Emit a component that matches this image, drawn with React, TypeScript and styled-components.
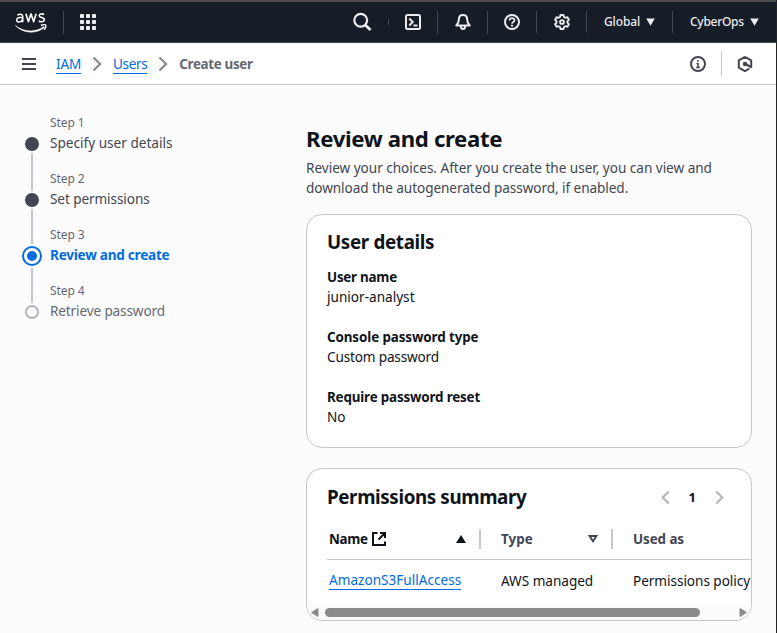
import React from 'react';
import styled, { createGlobalStyle } from 'styled-components';

const c = {
  ink: '#0f141a',
  body: '#424650',
  muted: '#656871',
  border: '#c6c6cd',
  disabled: '#b4b4bb',
  link: '#006ce0',
  nav: '#161d26',
};

const GlobalStyle = createGlobalStyle`
  * { box-sizing: border-box; }
  body { margin: 0; overflow: hidden; }
  h1, h2, p, dl, dt, dd, ol { margin: 0; padding: 0; }
  svg { display: block; flex: none; }
`;

const Page = styled.div`
  width: 777px;
  height: 633px;
  overflow: hidden;
  display: flex;
  flex-direction: column;
  background: #fcfcfd;
  border-right: 1px solid #202224;
  color: ${c.ink};
  font: 400 13.6px/20px 'Noto Sans', 'Open Sans', sans-serif;
`;

/* Global navigation */
const TopBar = styled.header`
  flex: none;
  height: 43px;
  display: flex;
  align-items: center;
  background: ${c.nav};
  border-top: 2px solid #4a4a4b;
  border-bottom: 1px solid #424650;
  color: #ebebf0;
`;
const Slot = styled.div<{ $w: number }>`
  flex: none;
  width: ${p => p.$w}px;
  display: flex;
  align-items: center;
  justify-content: center;
`;
const NavRule = styled.span<{ $h?: number }>`
  flex: none;
  width: 1px;
  height: ${p => p.$h ?? 23}px;
  background: #424650;
`;
const Spring = styled.div`
  flex: 1;
`;
const NavMenu = styled.div<{ $w: number; $ls: number }>`
  flex: none;
  width: ${p => p.$w}px;
  padding-left: 17px;
  display: flex;
  align-items: center;
  gap: 6px;
  font-size: 12px;
  font-weight: 500;
  letter-spacing: ${p => p.$ls}px;
`;

/* Breadcrumb bar */
const CrumbBar = styled.nav`
  flex: none;
  height: 42px;
  display: flex;
  align-items: center;
  background: #fff;
  border-bottom: 1px solid ${c.border};
  padding: 0 8px 0 22px;
`;
const Crumbs = styled.div`
  display: flex;
  align-items: center;
  margin-left: 20px;
`;
const Link = styled.a<{ $ls?: number }>`
  color: ${c.link};
  letter-spacing: ${p => p.$ls ?? 0}px;
  line-height: 18px;
  border-bottom: 1px solid ${c.link};
`;
const CrumbLink = styled(Link)`
  padding-top: 1px;
`;
const CrumbArrow = styled.span`
  width: 32px;
  display: flex;
  justify-content: center;
`;
const CurrentCrumb = styled.span`
  color: ${c.muted};
  font-size: 13.4px;
  font-weight: 700;
  letter-spacing: -0.34px;
`;
const CrumbRule = styled.span`
  width: 1px;
  height: 25px;
  background: ${c.border};
`;

/* Body */
const Body = styled.div`
  flex: 1;
  min-height: 0;
  display: flex;
`;
const Wizard = styled.aside`
  flex: none;
  width: 306px;
  padding: 28px 0 0 22px;
  display: flex;
  gap: 8px;
`;
const Rail = styled.div`
  width: 20px;
  padding-top: 24px;
  display: flex;
  flex-direction: column;
  align-items: center;
  gap: 2px;
`;
const Dot = styled.span<{ $kind: 'done' | 'todo' }>`
  width: 14px;
  height: 14px;
  border-radius: 50%;
  background: ${p => (p.$kind === 'done' ? c.body : '#fcfcfd')};
  border: 2px solid ${p => (p.$kind === 'done' ? c.body : c.disabled)};
`;
const CurrentDot = styled.span`
  width: 20px;
  height: 20px;
  padding: 3px;
  border-radius: 50%;
  border: 2px solid ${c.link};
  background: ${c.link} content-box;
`;
const RailLine = styled.span<{ $h: number }>`
  width: 2px;
  height: ${p => p.$h}px;
  background: ${c.border};
`;
const Steps = styled.ol`
  list-style: none;
  display: flex;
  flex-direction: column;
  gap: 16px;
`;
const StepLabel = styled.div`
  color: ${c.muted};
  font-size: 12px;
  letter-spacing: -0.1px;
`;
const StepTitle = styled.div<{ $tone: 'done' | 'current' | 'todo'; $ls: number }>`
  color: ${p => ({ done: c.body, current: c.link, todo: c.muted })[p.$tone]};
  font-weight: ${p => (p.$tone === 'current' ? 700 : 400)};
  letter-spacing: ${p => p.$ls}px;
`;

const Main = styled.main`
  width: 446px;
  padding-top: 39px;
  display: flex;
  flex-direction: column;
`;
const Title = styled.h1`
  font-size: 22.2px;
  line-height: 30px;
  font-weight: 700;
  letter-spacing: -0.35px;
`;
const Lead = styled.p`
  padding-top: 4px;
  margin-bottom: 16px;
  color: ${c.body};
  white-space: nowrap;
`;
const LeadLine = styled.span<{ $ls: number }>`
  display: block;
  letter-spacing: ${p => p.$ls}px;
`;
const Card = styled.section<{ $h: number }>`
  flex: none;
  height: ${p => p.$h}px;
  margin-bottom: 20px;
  border: 1px solid ${c.border};
  border-radius: 16px;
  background: #fff;
  overflow: hidden;
`;
const Heading = styled.h2<{ $ls: number }>`
  font-size: 18.8px;
  line-height: 24px;
  font-weight: 700;
  letter-spacing: ${p => p.$ls}px;
`;
const Details = styled.dl`
  padding: 15px 20px;
`;
const Pair = styled.div`
  margin-top: 20px;
  &:first-of-type { margin-top: 13px; }
`;
const Key = styled.dt<{ $ls: number }>`
  font-size: 13.4px;
  font-weight: 700;
  letter-spacing: ${p => p.$ls}px;
`;
const Value = styled.dd<{ $ls: number }>`
  letter-spacing: ${p => p.$ls}px;
`;

/* Permissions table */
const TableHead = styled.div`
  height: 50px;
  padding: 5px 24px 0 20px;
  display: flex;
  align-items: center;
  justify-content: space-between;
`;
const Pager = styled.div`
  display: flex;
  align-items: center;
  gap: 16px;
  padding-top: 1px;
  font-size: 13px;
  font-weight: 700;
`;
const Columns = styled.div`
  height: 41px;
  margin-left: 20px;
  display: flex;
  align-items: center;
  border-bottom: 1px solid ${c.border};
`;
const Row = styled(Columns)`
  height: 44px;
  padding-bottom: 3px;
  border-bottom: 0;
`;
const Cell = styled.div<{ $w: number; $pad: number; $ls: number; $tone?: string }>`
  flex: none;
  width: ${p => p.$w}px;
  padding-left: ${p => p.$pad}px;
  display: flex;
  align-items: center;
  color: ${p => p.$tone ?? c.ink};
  letter-spacing: ${p => p.$ls}px;
  white-space: nowrap;
`;
const HeadCell = styled(Cell)`
  font-size: 13.4px;
  font-weight: 700;
  & > svg:last-of-type { margin-right: 13px; }
`;
const NameLabel = styled.span`
  margin-right: 4px;
  padding-bottom: 1px;
`;
const Divider = styled.span`
  width: 2px;
  height: 20px;
  background: ${c.border};
`;
const ScrollTrack = styled.div`
  height: 16px;
  padding: 1px 4px 0;
  display: flex;
  align-items: center;
  background: #fbfbfb;
`;
const Thumb = styled.span`
  width: 375px;
  height: 9px;
  margin-left: 6px;
  border-radius: 5px;
  background: #8b8b8b;
`;

const Chevron = ({ dir, color, s = 16 }: { dir: 'l' | 'r'; color: string; s?: number }) => (
  <svg width={s} height={s} viewBox="0 0 16 16" fill="none" stroke={color} strokeWidth="2.300">
    <path d={dir === 'r' ? 'M4.500 1.500 11 8l-6.500 6.500' : 'M11.500 1.500 5 8l6.500 6.500'} />
  </svg>
);
const Caret = () => (
  <svg width="9" height="8" viewBox="0 0 9 8"><path d="M.2.5h8.600L4.500 7.700z" fill="#ebebf0" /></svg>
);
const Icon = ({ size = 16, color = '#ebebf0', children }: { size?: number; color?: string; children: React.ReactNode }) => (
  <svg width={size} height={size} viewBox="0 0 16 16" fill="none" stroke={color} strokeWidth="2" strokeLinejoin="round">
    {children}
  </svg>
);

const AwsLogo = () => (
  <svg width="32" height="21" viewBox="0 0 32 21" fill="none" stroke="#fff">
    <g strokeWidth="1.600" strokeLinejoin="round">
      <path d="M2.300 3.100c2.500-1.400 5.400-1.300 5.400 1.300v5.800M7.700 5.800C4.300 5.100 1.700 5.900 1.700 8.100c0 2.600 4.500 2.600 6-.6" />
      <path d="m10.900 1.700 2.500 8.100 2.600-8 2.600 8 2.500-8.100" />
      <path d="M29.200 2.500c-2-1-5-.7-5 1.200 0 2.300 5.200 1.300 5.200 3.900 0 2.400-3.500 2.700-5.600 1.400" />
    </g>
    <path d="M.4 13.500c8 6.800 20.300 7.300 28.200 1.100l.8 1c-7.800 6.700-21.500 6.200-29-2.100z" fill="#fff" strokeWidth=".5" />
    <path d="M25.800 13.300c3-.8 4.800-.7 5 0 .3.900-.2 2.800-1.700 4.600" strokeWidth="1.400" />
  </svg>
);

const Apps = () => (
  <svg width="16" height="16" viewBox="0 0 16 16" fill="#ebebf0">
    {[0, 6, 12].map(y => [0, 6, 12].map(x => <rect key={`${x}-${y}`} x={x} y={y} width="4" height="4" rx=".7" />))}
  </svg>
);

const details = [
  { key: 'User name', keyLs: -0.24, value: 'junior-analyst', ls: 0 },
  { key: 'Console password type', keyLs: -0.1, value: 'Custom password', ls: -0.17 },
  { key: 'Require password reset', keyLs: -0.17, value: 'No', ls: 0 },
];
const steps = [
  { title: 'Specify user details', tone: 'done', ls: 0 },
  { title: 'Set permissions', tone: 'done', ls: -0.1 },
  { title: 'Review and create', tone: 'current', ls: -0.26 },
  { title: 'Retrieve password', tone: 'todo', ls: -0.14 },
] as const;

export default function App() {
  return (
    <Page>
      <GlobalStyle />
      <TopBar>
        <Slot $w={62}><AwsLogo /></Slot>
        <Slot $w={1} />
        <NavRule />
        <Slot $w={48}><Apps /></Slot>
        <Spring />
        <Slot $w={52}>
          <svg width="20" height="20" viewBox="0 0 20 20" fill="none" stroke="#ebebf0" strokeWidth="2.2">
            <circle cx="8.700" cy="8.200" r="6.400" /><path d="m13 12.700 5.500 5.300" strokeWidth="2.800" />
          </svg>
        </Slot>
        <NavRule $h={6} />
        <Slot $w={48}>
          <Icon><rect x="1" y="1" width="14" height="14" rx="1.500" /><path d="m4.300 4.500 3.500 3.500-3.500 3.500M8.500 11.500h4" strokeWidth="1.900" strokeLinejoin="miter" /></Icon>
        </Slot>
        <NavRule />
        <Slot $w={49}>
          <Icon><path d="M8 1C5.300 1 3.900 3 3.900 5.200c0 3.500-1 4.600-2.600 6.300h13.400c-1.600-1.700-2.600-2.800-2.600-6.300C12.100 3 10.700 1 8 1z" /><path d="M5.800 12c0 4 4.400 4 4.400 0" /></Icon>
        </Slot>
        <NavRule />
        <Slot $w={48}>
          <Icon><circle cx="8" cy="8" r="7" /><path d="M5.600 6.500c0-3.200 5-3 5-.3 0 1.800-2.600 1.700-2.600 3.500" strokeWidth="1.800" /><path d="M8 10.700v1.900" strokeWidth="2" /></Icon>
        </Slot>
        <NavRule $h={22} />
        <Slot $w={49}>
          <Icon><path d="M6.500 1h3l.5 2 1.400.8 2-.6 1.500 2.600L13.400 7.300v1.400l1.500 1.500-1.500 2.600-2-.6L10 13l-.5 2h-3L6 13l-1.400-.8-2 .6-1.500-2.600 1.500-1.500V7.300L1.100 5.800l1.500-2.600 2 .6L6 3z" strokeWidth="1.900" /><circle cx="8" cy="8" r="1.900" strokeWidth="1.900" /></Icon>
        </Slot>
        <NavRule $h={22} />
        <NavMenu $w={85} $ls={-0.1}>Global <Caret /></NavMenu>
        <NavRule $h={22} />
        <NavMenu $w={103} $ls={-0.28}>CyberOps <Caret /></NavMenu>
      </TopBar>

      <CrumbBar>
        <svg width="14" height="12" viewBox="0 0 14 12" fill={c.body}><path d="M0 0h14v2H0zM0 5h14v2H0zM0 10h14v2H0z" /></svg>
        <Crumbs>
          <CrumbLink $ls={-0.2}>IAM</CrumbLink>
          <CrumbArrow><Chevron dir="r" color="#8c8c94" /></CrumbArrow>
          <CrumbLink $ls={-0.4}>Users</CrumbLink>
          <CrumbArrow><Chevron dir="r" color="#8c8c94" /></CrumbArrow>
          <CurrentCrumb>Create user</CurrentCrumb>
        </Crumbs>
        <Spring />
        <Slot $w={47}>
          <Icon color={c.body}><circle cx="8" cy="8" r="7" /><path d="M8 4v1.800M6.500 7.500H8V12M6.200 11.500h3.600" strokeWidth="1.600" /></Icon>
        </Slot>
        <CrumbRule />
        <Slot $w={46}>
          <Icon color={c.body}><path d="M8 .9l6.200 3.500v5.200M8 .9 1.800 4.400v7.200L8 15.100l4.500-2.600M14.200 9v3" /><circle cx="8" cy="8" r="1.500" fill={c.body} strokeWidth="1.500" /><path d="m8.500 8 5.500 3" /></Icon>
        </Slot>
      </CrumbBar>

      <Body>
        <Wizard>
          <Rail>
            <Dot $kind="done" />
            <RailLine $h={38} />
            <Dot $kind="done" />
            <RailLine $h={35} />
            <CurrentDot />
            <RailLine $h={35} />
            <Dot $kind="todo" />
          </Rail>
          <Steps>
            {steps.map((s, i) => (
              <li key={s.title}>
                <StepLabel>Step {i + 1}</StepLabel>
                <StepTitle $tone={s.tone} $ls={s.ls}>{s.title}</StepTitle>
              </li>
            ))}
          </Steps>
        </Wizard>

        <Main>
          <Title>Review and create</Title>
          <Lead>
            <LeadLine $ls={-0.03}>Review your choices. After you create the user, you can view and</LeadLine>
            <LeadLine $ls={-0.07}>download the autogenerated password, if enabled.</LeadLine>
          </Lead>

          <Card $h={234}>
            <Details>
              <Heading $ls={-0.34}>User details</Heading>
              {details.map(d => (
                <Pair key={d.key}>
                  <Key $ls={d.keyLs}>{d.key}</Key>
                  <Value $ls={d.ls}>{d.value}</Value>
                </Pair>
              ))}
            </Details>
          </Card>

          <Card $h={153}>
            <TableHead>
              <Heading $ls={-0.38}>Permissions summary</Heading>
              <Pager>
                <Chevron dir="l" color={c.disabled} s={15} />
                1
                <Chevron dir="r" color={c.disabled} s={15} />
              </Pager>
            </TableHead>
            <Columns>
              <HeadCell $w={152} $pad={2} $ls={-0.35}>
                <NameLabel>Name</NameLabel>
                <svg width="14" height="14" viewBox="0 0 14 14" fill="none" stroke={c.ink} strokeWidth="2">
                  <path d="M5.500 1H1v12h12V9.500M8 1h5v5M13 1 6.500 7.500" />
                </svg>
                <Spring />
                <svg width="10" height="8" viewBox="0 0 10 8"><path d="M5 0l5 8H0z" fill={c.ink} /></svg>
              </HeadCell>
              <Divider />
              <HeadCell $w={130} $pad={20} $ls={0.05} $tone={c.body}>
                Type
                <Spring />
                <svg width="10" height="8" viewBox="0 0 10 8" fill="none" stroke={c.body} strokeWidth="1.800"><path d="M1.600 1h6.800L5 6.300z" /></svg>
              </HeadCell>
              <Divider />
              <HeadCell $w={130} $pad={20} $ls={-0.08} $tone={c.body}>Used as</HeadCell>
            </Columns>
            <Row>
              <Cell $w={152} $pad={2} $ls={0}><Link>AmazonS3FullAccess</Link></Cell>
              <Cell $w={132} $pad={22} $ls={-0.03}>AWS managed</Cell>
              <Cell $w={130} $pad={22} $ls={-0.05}>Permissions policy</Cell>
            </Row>
            <ScrollTrack>
              <svg width="8" height="9" viewBox="0 0 8 9"><path d="M0 4.500 6 .5Q7.500-.2 7.500 1v7q0 1.200-1.500.5z" fill="#8b8b8b" /></svg>
              <Thumb />
              <Spring />
              <svg width="8" height="9" viewBox="0 0 8 9"><path d="M8 4.500 2 .5Q.5-.2.5 1v7q0 1.200 1.500.5z" fill="#8b8b8b" /></svg>
            </ScrollTrack>
          </Card>
        </Main>
      </Body>
    </Page>
  );
}
